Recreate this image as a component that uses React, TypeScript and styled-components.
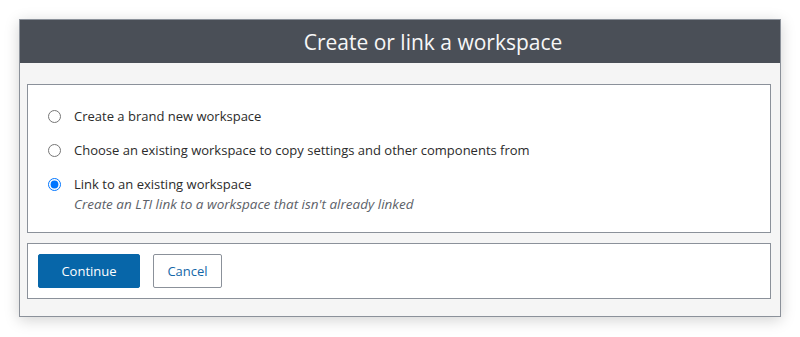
import React, { useState } from 'react';
import styled, { createGlobalStyle } from 'styled-components';

const GlobalStyle = createGlobalStyle`
  html, body {
    margin: 0;
    padding: 0;
    background: #ffffff;
    font-family: 'Open Sans', 'Noto Sans', Arial, sans-serif;
  }
`;

const Page = styled.div`
  padding: 19px 19px 20px 19px;
`;

const Dialog = styled.div`
  width: 762px;
  box-sizing: border-box;
  border: 1px solid #8b919a;
  background: #f5f5f5;
  box-shadow: 0 3px 14px rgba(0, 0, 0, 0.18);
`;

const Header = styled.div`
  height: 43px;
  background: #4a4f57;
  color: #f7f7f7;
  font-size: 21px;
  display: flex;
  align-items: center;
  justify-content: center;
  padding-left: 66px;
`;

const Body = styled.div`
  padding: 21px 9px 17px 7px;
  display: flex;
  flex-direction: column;
  gap: 10px;
`;

const Panel = styled.div<{ $pad: string }>`
  background: #ffffff;
  border: 1px solid #8b919a;
  padding: ${(p) => p.$pad};
`;

const OptionList = styled.div`
  display: flex;
  flex-direction: column;
  gap: 14px;
`;

const Option = styled.label`
  display: grid;
  grid-template-columns: 26px 1fr;
  align-items: center;
  font-size: 13px;
  line-height: 20px;
  color: #2b2b2b;
  cursor: pointer;
`;

const Radio = styled.input`
  width: 13px;
  height: 13px;
  margin: 0;
`;

const Hint = styled.span`
  grid-column: 2;
  font-style: italic;
  font-size: 13.5px;
  color: #5c6168;
`;

const Actions = styled.div`
  display: flex;
  gap: 13px;
`;

const Button = styled.button<{ $primary?: boolean }>`
  height: 34px;
  width: ${(p) => (p.$primary ? '102px' : '69px')};
  padding: 0;
  border-radius: 2px;
  font-family: inherit;
  font-size: 13px;
  border: 1px solid ${(p) => (p.$primary ? '#0766a9' : '#8b919a')};
  background: ${(p) => (p.$primary ? '#0766a9' : '#ffffff')};
  color: ${(p) => (p.$primary ? '#ffffff' : '#1467a8')};
  cursor: pointer;
`;

const options = [
  { id: 'new', label: 'Create a brand new workspace' },
  { id: 'copy', label: 'Choose an existing workspace to copy settings and other components from' },
  {
    id: 'link',
    label: 'Link to an existing workspace',
    hint: "Create an LTI link to a workspace that isn't already linked",
  },
];

export default function App() {
  const [choice, setChoice] = useState('link');

  return (
    <Page>
      <GlobalStyle />
      <Dialog>
        <Header>Create or link a workspace</Header>
        <Body>
          <Panel $pad="21px 20px 18px 20px">
            <OptionList>
              {options.map((o) => (
                <Option key={o.id}>
                  <Radio
                    type="radio"
                    name="workspace"
                    checked={choice === o.id}
                    onChange={() => setChoice(o.id)}
                  />
                  <span>{o.label}</span>
                  {o.hint && <Hint>{o.hint}</Hint>}
                </Option>
              ))}
            </OptionList>
          </Panel>
          <Panel $pad="10px 10px">
            <Actions>
              <Button $primary>Continue</Button>
              <Button>Cancel</Button>
            </Actions>
          </Panel>
        </Body>
      </Dialog>
    </Page>
  );
}
